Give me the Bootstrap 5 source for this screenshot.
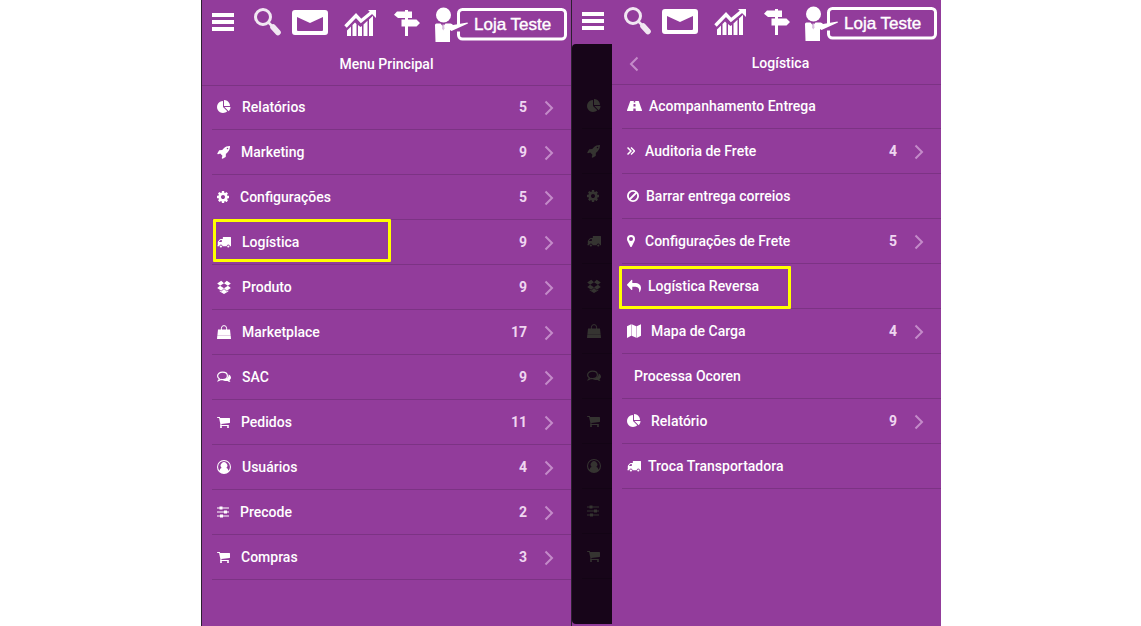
<!DOCTYPE html>
<html lang="pt-br">
<head>
<meta charset="utf-8">
<meta name="viewport" content="width=device-width, initial-scale=1">
<title>Loja Teste</title>
<link href="https://cdn.jsdelivr.net/npm/bootstrap@5.3.0/dist/css/bootstrap.min.css" rel="stylesheet">
<style>
:root { --purple: #923c9b; --line: #7c3384; --edge: #2c2030; --pale: #efd6f1; }
body { font: 500 14px/20px Roboto, "Liberation Sans", sans-serif; background: #fff; padding-left: 1px; }
svg { display: block; fill: currentColor; flex: none; }
.screens { max-width: 740px; }
.screen { background: var(--purple); border-left: 1px solid var(--edge); color: #fff; }
.screen-first { padding-top: 1px; }
.toolbar { height: 44px; padding: 0 4px 0 10px; gap: 11px; }
.tool { background: none; border: 0; padding: 0; color: #fff; display: block; }
.shop { font: 17px/20px "Liberation Sans", sans-serif; height: 44px; width: 136px; padding: 3px 0 0 43px; -webkit-text-stroke: .4px #fff; text-align: left; }
.shop svg { left: 0; top: 0; }
.shop span { position: relative; }
.menu-head { height: 41px; border-bottom: 1px solid var(--line); padding-bottom: 2px; }
.sub .menu-head { padding-left: 8px; }
.back { left: 17px; top: 12px; color: #c48bc9; }
.menu { margin: 0 0 0 10px; }
.menu li { border-bottom: 1px solid var(--line); height: 45px; }
.menu li:first-child { height: 44px; }
.menu a { color: #fff; text-decoration: none; padding: 0 17px 0 5px; }
.menu li:first-child a { padding-bottom: 1px; }
.menu a > svg:first-child { margin-right: 10px; }
.screen-first .menu a > svg:first-child { margin-right: 11px; }
.menu a > svg.tight:first-child { margin-right: 7px; }
.count { color: var(--pale); font-weight: 700; }
.go { color: #c48bc9; margin: 2px 0 0 17px; }
.marked::after { content: ""; position: absolute; border: 3px solid #ff0; height: 43px; border-radius: 1px; pointer-events: none; }
.marked-main::after { left: 1px; top: -1px; width: 178px; }
.marked-sub::after { left: -3px; top: 2px; width: 172px; }
.behind { width: 40px; background: #170519; border-radius: 4px 0 0 4px; margin-bottom: 2px; padding-top: 41px; }
.behind .menu li { border-color: #130415; }
.behind .menu a { color: #353431; padding-right: 0; white-space: nowrap; }
.stroke { fill: none; stroke: currentColor; }
</style>
</head>
<body>
<svg class="d-none" aria-hidden="true">
  <symbol id="pie" viewBox="0 0 1792 1792"><path d="M768 890l546 546q-106 108-247.500 168t-298.500 60q-209 0-385.500-103t-279.500-279.500-103-385.500 103-385.500 279.500-279.500 385.500-103v762zm187 6h773q0 157-60 298.500t-168 247.500zm709-128h-768v-768q209 0 385.500 103t279.500 279.500 103 385.500z"/></symbol>
  <symbol id="rocket" viewBox="0 0 1664 1792"><path d="M1440 448q0-40-28-68t-68-28-68 28-28 68 28 68 68 28 68-28 28-68zm224-288q0 249-75.500 430.500t-253.500 360.500q-81 80-195 176l-20 379q-2 16-16 26l-384 224q-7 4-16 4-12 0-23-9l-64-64q-13-14-8-32l85-276-281-281-276 85q-3 1-9 1-14 0-23-9l-64-64q-17-19-5-39l224-384q10-14 26-16l379-20q96-114 176-195 188-187 358-258t431-71q14 0 24 9.500t10 22.500z"/></symbol>
  <symbol id="cog" viewBox="128 0 1536 1792"><path d="M1152 896q0-106-75-181t-181-75-181 75-75 181 75 181 181 75 181-75 75-181zm512-109v222q0 12-8 23t-20 13l-185 28q-19 54-39 91 35 50 107 138 10 12 10 25t-9 23q-27 37-99 108t-94 71q-12 0-26-9l-138-108q-44 23-91 38-16 136-29 186-7 28-36 28h-222q-14 0-24.500-8.500t-11.500-21.500l-28-184q-49-16-90-37l-141 107q-10 9-25 9-14 0-25-11-126-114-165-168-7-10-7-23 0-12 8-23 15-21 51-66.500t54-70.500q-27-50-41-99l-183-27q-13-2-21-12.500t-8-23.500v-222q0-12 8-23t19-13l186-28q14-46 39-92-40-57-107-138-10-12-10-24 0-10 9-23 26-36 98.500-107.500t94.500-71.500q13 0 26 10l138 107q44-23 91-38 16-136 29-186 7-28 36-28h222q14 0 24.500 8.500t11.500 21.500l28 184q49 16 90 37l142-107q9-9 24-9 13 0 25 10 129 119 165 170 7 8 7 22 0 12-8 23-15 21-51 66.500t-54 70.500q26 50 41 98l183 28q13 2 21 12.500t8 23.500z"/></symbol>
  <symbol id="truck" viewBox="0 0 14 14"><path d="M5.800 2.500q0-.5.500-.5h7.200q.5 0 .5.500v8.200q0 .5-.7.500h-.4a1.600 1.600 0 0 0-3.200 0H5.500a1.600 1.600 0 0 0-3.200 0H1Q.3 11.200.3 10.700q0-.4.500-.5V7.200q0-.6.400-1L3 4.300q.4-.4 1-.4h1.800zM2 7h2.800V5H3.700L2 6.700z" fill-rule="evenodd"/><circle cx="3.900" cy="11.500" r="1.100"/><circle cx="11.300" cy="11.500" r="1.100"/></symbol>
  <symbol id="box" viewBox="0 0 14 14"><path d="M4.200 .8L7 3.200 3.100 5.700 .2 3.400zM9.800 .8L7 3.200l3.900 2.500 2.900-2.300zM3.100 5.700L7 8.300 4.200 10.700 .2 8zM10.900 5.700L7 8.300l2.800 2.400 4-2.700zM2.700 10.400l1.500 1L7 9l2.800 2.400 1.500-1v1L7 14l-4.300-2.600z"/></symbol>
  <symbol id="bag" viewBox="0 0 14 14"><path d="M1 4.500h12l.6 5.700H.4zM.3 10.600h13.400L14 14H0z"/><path d="M4.400 6V3.200a2.600 2.600 0 0 1 5.200 0V6" fill="none" stroke="currentColor"/></symbol>
  <symbol id="chat" viewBox="0 0 14 14"><path d="M5.500 2.200C8.200 2.200 10.400 3.700 10.400 6S8.200 9.600 5.500 9.600c-.6 0-1.100-.1-1.600-.2-.7.700-1.500 1-2.400 1.200.5-.5.7-1 .8-1.800C1.200 8.100.6 7.200.6 6c0-2.300 2.200-3.800 4.900-3.800z" fill="none" stroke="currentColor" stroke-width="1.200"/><path d="M11.600 4.400C13 5 14 6.200 14 7.600c0 1-.6 1.900-1.500 2.600.1.800.5 1.400 1 1.900-1.200 0-2.200-.4-3-1.100-2 .3-3.900-.1-5.200-1.200 3.500.1 6.600-1.900 6.300-5.400z"/></symbol>
  <symbol id="cart" viewBox="64 0 1664 1792"><path d="M704 1536q0 52-38 90t-90 38-90-38-38-90 38-90 90-38 90 38 38 90zm896 0q0 52-38 90t-90 38-90-38-38-90 38-90 90-38 90 38 38 90zm128-1088v512q0 24-16.500 42.500t-40.500 21.500l-1044 122q13 60 13 70 0 16-24 64h920q26 0 45 19t19 45-19 45-45 19h-1024q-26 0-45-19t-19-45q0-11 8-31.500t16-36 21.500-40 15.500-29.500l-177-823h-204q-26 0-45-19t-19-45 19-45 45-19h256q16 0 28.500 6.500t19.500 15.500 13 24.500 8 26 5.500 29.500 4.500 26h1201q26 0 45 19t19 45z"/></symbol>
  <symbol id="user" viewBox="0 0 14 14"><path d="M7 0a7 7 0 1 1 0 14A7 7 0 0 1 7 0zM2.500 10.700C2.900 9 3.600 8 4.700 7.900A3.300 3.300 0 1 1 9.300 7.900C10.400 8 11.100 9 11.500 10.700A5.900 5.900 0 1 0 2.500 10.700z" fill-rule="evenodd"/><circle cx="7" cy="5.500" r="2.300" /></symbol>
  <symbol id="sliders" viewBox="0 0 12 14"><path d="M0 2.500h12v1H0zM0 6.500h12v1H0zM0 10.500h12v1H0z"/><path d="M2.500 1.500h3v3h-3zM7 5.500h3v3H7zM3 9.500h3v3H3z"/></symbol>
  <symbol id="road" viewBox="0 0 15 14"><path d="M3.300 2h3.500l-.1 1.600h1.600L8.200 2h3.500L15 11.300q.2.700-.5.700H8.800l-.2-2.600H6.400L6.200 12H.5Q-.2 12 0 11.300zM6.600 4.900l-.2 2.600h2.200l-.2-2.600z" fill-rule="evenodd"/></symbol>
  <symbol id="double" viewBox="0 0 8 14"><path d="M.5 3.500L4 7 .5 10.500M4 3.500L7.500 7 4 10.500" fill="none" stroke="currentColor" stroke-width="1.500"/></symbol>
  <symbol id="ban" viewBox="0 0 12 14"><circle cx="6" cy="7" r="5.100" fill="none" stroke="currentColor" stroke-width="1.800"/><path d="M2.500 10.500l7-7" stroke="currentColor" stroke-width="1.800"/></symbol>
  <symbol id="pin" viewBox="0 0 8 14"><path d="M4 1a4 4 0 0 1 4 4c0 .9-.2 1.500-.5 2.100L4.800 12.500q-.8 1-1.600 0L.5 7.100C.2 6.500 0 5.900 0 5a4 4 0 0 1 4-4zm0 2a2 2 0 1 0 0 4 2 2 0 0 0 0-4z" fill-rule="evenodd"/></symbol>
  <symbol id="reply" viewBox="0 0 14 14"><path d="M5.300 1v3h2C12 4 14 6 14 9c0 1.700-.7 3-1.300 4-.2.300-.5.200-.5-.1C12.500 9 11 7.700 7.300 7.700h-2v3q-.3.700-.9.200L.1 6.200q-.2-.3 0-.6L4.400.9q.6-.5.900.1z"/></symbol>
  <symbol id="map" viewBox="0 0 14 14"><path d="M0 2.200L4.200.2v11.600L0 14zM4.600 .2l4.700 2v11.600l-4.700-2zM9.700 2.200L14 .2v11.600l-4.300 2.200z"/></symbol>
  <symbol id="next" viewBox="0 0 10 16"><path d="M1.500 1.500L8 8l-6.500 6.500" fill="none" stroke="currentColor" stroke-width="2"/></symbol>
  <symbol id="t-bars" viewBox="0 0 31 44"><path d="M0 12h22v4H0zM0 19h22v4H0zM0 26h22v4H0z"/></symbol>
  <symbol id="t-search" viewBox="0 0 27 44"><circle cx="9" cy="16" r="7.500" fill="none" stroke="currentColor" stroke-width="3"/><path d="M14.500 21.500l3 3" stroke="currentColor" stroke-width="2.500"/><path d="M19 26l5 5.500" stroke="currentColor" stroke-width="5.600" stroke-linecap="round"/></symbol>
  <symbol id="t-mail" viewBox="0 0 36 44"><path d="M3 9h30a3 3 0 0 1 3 3v19a3 3 0 0 1-3 3H3a3 3 0 0 1-3-3V12a3 3 0 0 1 3-3zm2 7v13q0 1 1 1h24q1 0 1-1V16l-13 6z" fill-rule="evenodd"/></symbol>
  <symbol id="t-chart" viewBox="0 0 37 44"><path d="M6.500 25.500L17 14.500l5 5.500L33 11" fill="none" stroke="currentColor" stroke-width="3.400"/><path d="M29 9h8v8zM8 29.500l4-4V35H8zM13.500 24l2.500-2.600 1.500 1.500V35h-4zM19 24l2.500 2 1.500-1V35h-4zM24.500 23.500l4-3.800V35h-4zM30 18.500l4-3.800V35h-4z"/></symbol>
  <symbol id="t-sign" viewBox="0 0 33 44"><path d="M18 9h3v1.500h4v6.500h-14L7 13.800l3-3.300h8zM14.500 18.500h15L33 22l-3.500 3.500h-15zM18 17h3v18h-3z"/></symbol>
  <symbol id="t-shop" viewBox="0 0 136 44"><rect x="27.500" y="8.500" width="107" height="29.500" rx="4" fill="none" stroke="currentColor" stroke-width="3"/><path d="M24 24.500h8v6h-8z" fill="#923c9b"/><circle cx="12.500" cy="14" r="8.500" fill="#923c9b"/><circle cx="12.500" cy="14" r="7.500"/><path d="M4 24q0-1.500 1.500-1.500h4l2.500 3 2.500-3h5q1.500 0 2.500 1.500L36.500 21.500l.5 1-16.500 7.500-1.500-1V41H4.500z"/><path d="M11.500 23.500h1.500l.5 4-1.200 2-1.300-2z" fill="#d9bfe0"/></symbol>
</svg>

<main class="screens container-fluid p-0 row g-0 mx-auto min-vh-100">
  <section class="screen screen-first col-6">
    <nav class="toolbar d-flex" aria-label="Atalhos">
      <button class="tool" aria-label="Menu"><svg width="31" height="44"><use href="#t-bars"/></svg></button>
      <button class="tool" aria-label="Buscar"><svg width="27" height="44" opacity=".88"><use href="#t-search"/></svg></button>
      <button class="tool" aria-label="Mensagens"><svg width="36" height="44"><use href="#t-mail"/></svg></button>
      <button class="tool" aria-label="Vendas"><svg width="37" height="44"><use href="#t-chart"/></svg></button>
      <button class="tool" aria-label="Direções"><svg width="33" height="44"><use href="#t-sign"/></svg></button>
      <button class="tool shop position-relative"><svg class="position-absolute" width="136" height="44"><use href="#t-shop"/></svg><span>Loja Teste</span></button>
    </nav>
    <header class="menu-head d-flex align-items-center justify-content-center">Menu Principal</header>
    <ul class="menu list-unstyled">
      <li><a href="#" class="d-flex align-items-center h-100"><svg width="14" height="14"><use href="#pie"/></svg>Relatórios<span class="count ms-auto">5</span><svg class="go" width="10" height="16"><use href="#next"/></svg></a></li>
      <li><a href="#" class="d-flex align-items-center h-100"><svg width="13" height="14"><use href="#rocket"/></svg>Marketing<span class="count ms-auto">9</span><svg class="go" width="10" height="16"><use href="#next"/></svg></a></li>
      <li><a href="#" class="d-flex align-items-center h-100"><svg width="12" height="14"><use href="#cog"/></svg>Configurações<span class="count ms-auto">5</span><svg class="go" width="10" height="16"><use href="#next"/></svg></a></li>
      <li class="marked marked-main position-relative"><a href="#" class="d-flex align-items-center h-100"><svg width="14" height="14"><use href="#truck"/></svg>Logística<span class="count ms-auto">9</span><svg class="go" width="10" height="16"><use href="#next"/></svg></a></li>
      <li><a href="#" class="d-flex align-items-center h-100"><svg width="14" height="14"><use href="#box"/></svg>Produto<span class="count ms-auto">9</span><svg class="go" width="10" height="16"><use href="#next"/></svg></a></li>
      <li><a href="#" class="d-flex align-items-center h-100"><svg width="14" height="14"><use href="#bag"/></svg>Marketplace<span class="count ms-auto">17</span><svg class="go" width="10" height="16"><use href="#next"/></svg></a></li>
      <li><a href="#" class="d-flex align-items-center h-100"><svg width="14" height="14"><use href="#chat"/></svg>SAC<span class="count ms-auto">9</span><svg class="go" width="10" height="16"><use href="#next"/></svg></a></li>
      <li><a href="#" class="d-flex align-items-center h-100"><svg width="13" height="14"><use href="#cart"/></svg>Pedidos<span class="count ms-auto">11</span><svg class="go" width="10" height="16"><use href="#next"/></svg></a></li>
      <li><a href="#" class="d-flex align-items-center h-100"><svg width="14" height="14"><use href="#user"/></svg>Usuários<span class="count ms-auto">4</span><svg class="go" width="10" height="16"><use href="#next"/></svg></a></li>
      <li><a href="#" class="d-flex align-items-center h-100"><svg width="12" height="14"><use href="#sliders"/></svg>Precode<span class="count ms-auto">2</span><svg class="go" width="10" height="16"><use href="#next"/></svg></a></li>
      <li><a href="#" class="d-flex align-items-center h-100"><svg width="13" height="14"><use href="#cart"/></svg>Compras<span class="count ms-auto">3</span><svg class="go" width="10" height="16"><use href="#next"/></svg></a></li>
    </ul>
  </section>

  <section class="screen col-6 d-flex flex-column">
    <nav class="toolbar d-flex" aria-label="Atalhos">
      <button class="tool" aria-label="Menu"><svg width="31" height="44"><use href="#t-bars"/></svg></button>
      <button class="tool" aria-label="Buscar"><svg width="27" height="44" opacity=".88"><use href="#t-search"/></svg></button>
      <button class="tool" aria-label="Mensagens"><svg width="36" height="44"><use href="#t-mail"/></svg></button>
      <button class="tool" aria-label="Vendas"><svg width="37" height="44"><use href="#t-chart"/></svg></button>
      <button class="tool" aria-label="Direções"><svg width="33" height="44"><use href="#t-sign"/></svg></button>
      <button class="tool shop position-relative"><svg class="position-absolute" width="136" height="44"><use href="#t-shop"/></svg><span>Loja Teste</span></button>
    </nav>
    <div class="d-flex flex-fill">
      <div class="behind flex-shrink-0 overflow-hidden" aria-hidden="true">
        <ul class="menu list-unstyled">
          <li><a class="d-flex align-items-center h-100"><svg width="14" height="14"><use href="#pie"/></svg></a></li>
          <li><a class="d-flex align-items-center h-100"><svg width="13" height="14"><use href="#rocket"/></svg></a></li>
          <li><a class="d-flex align-items-center h-100"><svg width="12" height="14"><use href="#cog"/></svg></a></li>
          <li><a class="d-flex align-items-center h-100"><svg width="14" height="14"><use href="#truck"/></svg></a></li>
          <li><a class="d-flex align-items-center h-100"><svg width="14" height="14"><use href="#box"/></svg></a></li>
          <li><a class="d-flex align-items-center h-100"><svg width="14" height="14"><use href="#bag"/></svg></a></li>
          <li><a class="d-flex align-items-center h-100"><svg width="14" height="14"><use href="#chat"/></svg></a></li>
          <li><a class="d-flex align-items-center h-100"><svg width="13" height="14"><use href="#cart"/></svg></a></li>
          <li><a class="d-flex align-items-center h-100"><svg width="14" height="14"><use href="#user"/></svg></a></li>
          <li><a class="d-flex align-items-center h-100"><svg width="12" height="14"><use href="#sliders"/></svg></a></li>
          <li><a class="d-flex align-items-center h-100"><svg width="13" height="14"><use href="#cart"/></svg></a></li>
        </ul>
      </div>
      <div class="sub flex-fill">
        <header class="menu-head position-relative d-flex align-items-center justify-content-center"><button class="tool back position-absolute" aria-label="Voltar"><svg width="10" height="16" viewBox="0 0 10 16"><path class="stroke" stroke-width="2" d="M8.500 1.500L2 8l6.500 6.500"/></svg></button>Logística</header>
        <ul class="menu list-unstyled">
          <li><a href="#" class="d-flex align-items-center h-100"><svg class="tight" width="15" height="14"><use href="#road"/></svg>Acompanhamento Entrega</a></li>
          <li><a href="#" class="d-flex align-items-center h-100"><svg width="8" height="14"><use href="#double"/></svg>Auditoria de Frete<span class="count ms-auto">4</span><svg class="go" width="10" height="16"><use href="#next"/></svg></a></li>
          <li><a href="#" class="d-flex align-items-center h-100"><svg class="tight" width="12" height="14"><use href="#ban"/></svg>Barrar entrega correios</a></li>
          <li><a href="#" class="d-flex align-items-center h-100"><svg width="8" height="14"><use href="#pin"/></svg>Configurações de Frete<span class="count ms-auto">5</span><svg class="go" width="10" height="16"><use href="#next"/></svg></a></li>
          <li class="marked marked-sub position-relative"><a href="#" class="d-flex align-items-center h-100"><svg class="tight" width="14" height="14"><use href="#reply"/></svg>Logística Reversa</a></li>
          <li><a href="#" class="d-flex align-items-center h-100"><svg width="14" height="14"><use href="#map"/></svg>Mapa de Carga<span class="count ms-auto">4</span><svg class="go" width="10" height="16"><use href="#next"/></svg></a></li>
          <li><a href="#" class="d-flex align-items-center h-100 ps-2"><span class="ms-1">Processa Ocoren</span></a></li>
          <li><a href="#" class="d-flex align-items-center h-100"><svg width="14" height="14"><use href="#pie"/></svg>Relatório<span class="count ms-auto">9</span><svg class="go" width="10" height="16"><use href="#next"/></svg></a></li>
          <li><a href="#" class="d-flex align-items-center h-100"><svg class="tight" width="14" height="14"><use href="#truck"/></svg>Troca Transportadora</a></li>
        </ul>
      </div>
    </div>
  </section>
</main>
<script src="https://cdn.jsdelivr.net/npm/bootstrap@5.3.0/dist/js/bootstrap.bundle.min.js"></script>
</body>
</html>
